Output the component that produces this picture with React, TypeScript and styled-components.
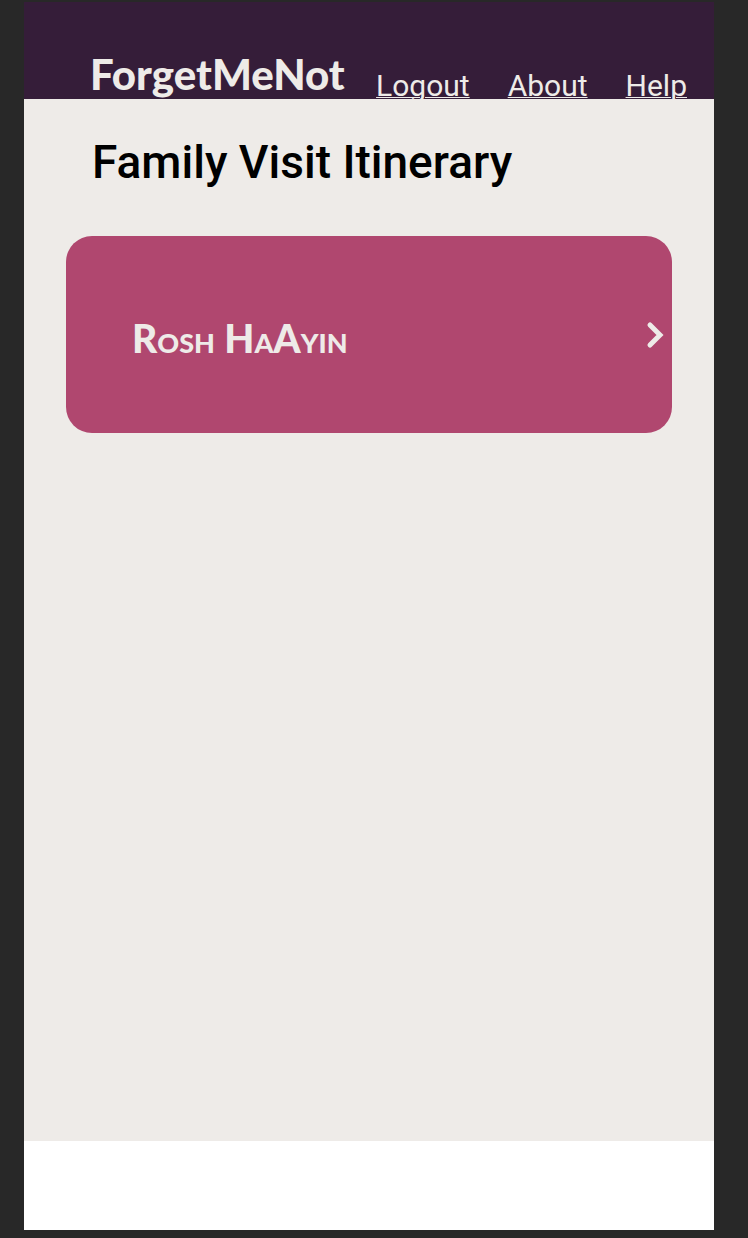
import React from "react";
import styled, { createGlobalStyle } from "styled-components";

const colors = {
  backdrop: "#282828",
  plum: "#351d39",
  cream: "#eeebe8",
  rose: "#b0476f",
};

const GlobalStyle = createGlobalStyle`
  *, *::before, *::after { box-sizing: border-box; }
  body {
    margin: 0;
    background: ${colors.backdrop};
    color: #000;
    font-family: Roboto, "Liberation Sans", sans-serif;
  }
`;

const Frame = styled.div`
  display: flex;
  flex-direction: column;
  min-height: 100vh;
  padding: 2px 34px 8px 24px;
`;

const Header = styled.header`
  display: flex;
  align-items: flex-end;
  justify-content: space-between;
  height: 97px;
  padding: 0 27px 0 66px;
  background: ${colors.plum};
  color: ${colors.cream};
`;

const Logo = styled.span`
  font-family: Lato, "Liberation Sans", sans-serif;
  font-size: 42px;
  font-weight: 900;
  line-height: 50px;
`;

const Nav = styled.nav`
  display: flex;
  gap: 38px;
`;

const NavLink = styled.a`
  color: inherit;
  font-size: 30px;
  line-height: 26px;
  text-decoration: underline;
  text-decoration-thickness: 1px;
  text-underline-offset: 1px;
`;

const Main = styled.main`
  flex: 1;
  padding: 32px 42px;
  background: ${colors.cream};
`;

const Title = styled.h1`
  margin: 0 0 43px;
  padding-left: 26px;
  font-size: 46px;
  font-weight: 500;
  line-height: 62px;
`;

const PlaceCard = styled.button`
  display: flex;
  align-items: center;
  justify-content: space-between;
  width: 100%;
  height: 197px;
  padding: 0 8px 0 66px;
  border: 0;
  border-radius: 26px;
  background: ${colors.rose};
  color: ${colors.cream};
  cursor: pointer;
`;

const PlaceName = styled.span`
  padding-top: 6px;
  font-family: Lato, "Liberation Sans", sans-serif;
  font-size: 39px;
  font-weight: 900;
  font-variant: small-caps;
  line-height: 56px;
`;

const Chevron = styled.svg`
  width: 18px;
  height: 28px;
`;

const Footer = styled.footer`
  height: 89px;
  background: #fff;
`;

export default function App() {
  return (
    <>
      <GlobalStyle />
      <Frame>
        <Header>
          <Logo>ForgetMeNot</Logo>
          <Nav>
            <NavLink href="#logout">Logout</NavLink>
            <NavLink href="#about">About</NavLink>
            <NavLink href="#help">Help</NavLink>
          </Nav>
        </Header>
        <Main>
          <Title>Family Visit Itinerary</Title>
          <PlaceCard type="button">
            <PlaceName>Rosh HaAyin</PlaceName>
            <Chevron viewBox="0 0 18 28" aria-hidden="true">
              <path
                d="M4 4 L14 14 L4 24"
                fill="none"
                stroke="currentColor"
                strokeWidth="5"
                strokeLinecap="round"
                strokeLinejoin="miter"
              />
            </Chevron>
          </PlaceCard>
        </Main>
        <Footer />
      </Frame>
    </>
  );
}
